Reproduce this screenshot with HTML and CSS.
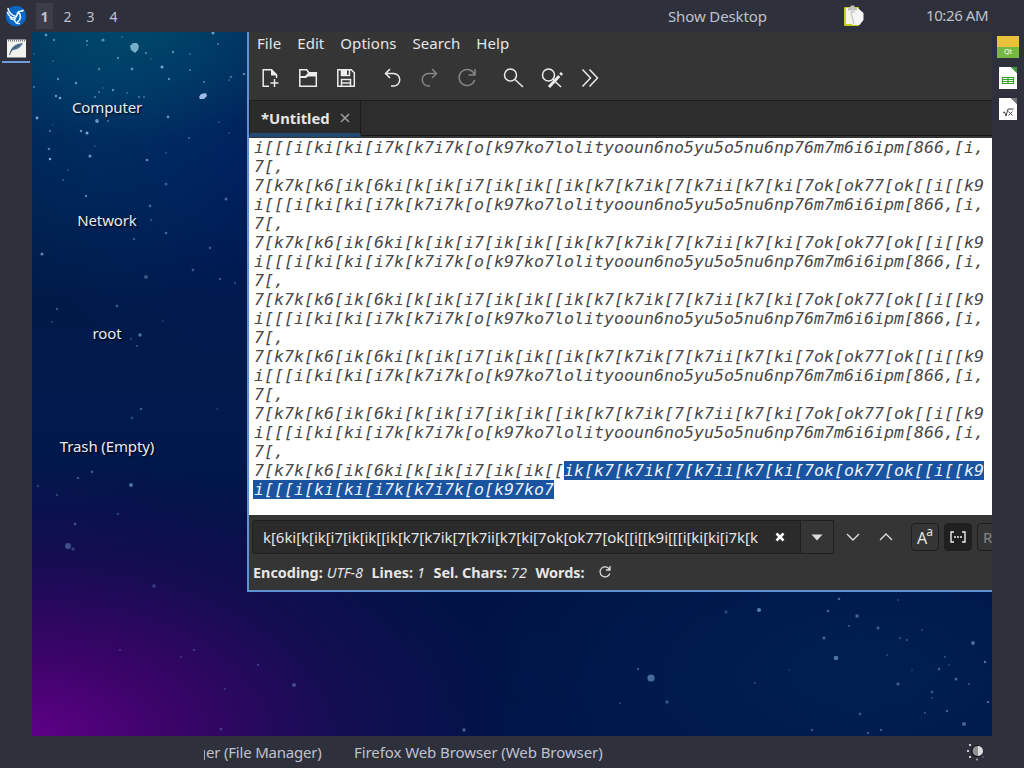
FILE: index.html
```html
<!DOCTYPE html>
<html lang="en">
<head>
  <meta charset="UTF-8" />
  <meta name="viewport" content="width=device-width, initial-scale=1.0"/>
  <title>Desktop</title>
  <link rel="stylesheet" href="styles.css">
</head>
<body>
  <div class="screen">
    <header class="panel top-panel">
      <svg class="start" width="22" height="22" viewBox="0 0 22 22">
        <circle cx="11" cy="11" r="10.3" fill="#0a68c4"/>
        <g fill="none" stroke="#e9f5ff" stroke-linecap="round">
          <path d="M3 3.500C4 8 7 10.500 11 11.500M2.500 7.500C3.500 11 7 13 10 13M5 12.500c1 2 3 2.500 5 2" stroke-width="1.500"/>
          <path d="M10 13c2.500-1 1.500-4.500 3.500-6 1.500-1 3-.5 4.500-1.500M13.500 7.500c3 2.500 2.500 7-1 9.500" stroke-width="1.700"/>
          <path d="M9.500 15c.5 2 2 4 5 3.500" stroke-width="1.300"/>
        </g>
      </svg>
      <nav class="pager">
        <span class="page current">1</span>
        <span class="page">2</span>
        <span class="page">3</span>
        <span class="page">4</span>
      </nav>
      <span class="show-desktop">Show Desktop</span>
      <svg class="clipboard" width="22" height="22" viewBox="0 0 22 22">
        <rect x="1" y="2" width="15" height="19" rx="1" fill="#c5cf18"/>
        <path d="M3 3h12v16H3z" fill="#f4f4e8"/>
        <path d="M8 7l8-3 4.500 4v7l-4 5H9z" fill="#f5f5f5"/>
        <path d="M8 7l3 12.500M8 7h4" stroke="#bbb" fill="none"/>
        <path d="M5 2.500h2.500V.5h4v2H14v3H5z" fill="#c2c2c2"/>
      </svg>
      <span class="clock">10:26 AM</span>
    </header>

    <aside class="panel left-panel">
      <div class="task">
        <svg width="20" height="20" viewBox="0 0 20 20">
          <rect x="0" y="1.500" width="19" height="18" fill="#f2f2ee"/>
          <path d="M1 2.500h17" stroke="#777" stroke-width="2" stroke-dasharray="1 1"/>
          <path d="M3 16c0-6 4-10 13-11-2 4-5 7-11 7z" fill="#56789a"/>
          <path d="M2.500 17C4 12 8 9 13 6.500" fill="none" stroke="#26425a" stroke-width=".8"/>
        </svg>
      </div>
    </aside>

    <main class="desktop">
      <svg class="stars" width="960" height="704" viewBox="32 32 960 704">
        <g fill="#9fd3e8">
          <path d="M130 46l3-3h4l2 3-1 4-3 3-4-3z" opacity=".75"/>
          <path d="M199 97l2-3 5-1 1 3-3 3h-4z" fill="#b9d4ff" opacity=".85"/>
        </g>
        <g id="stars" fill="#7fb2da"></g>
      </svg>

      <div class="icons">
        <span class="icon-label">Computer</span>
        <span class="icon-label">Network</span>
        <span class="icon-label">root</span>
        <span class="icon-label">Trash (Empty)</span>
      </div>

      <section class="window">
        <nav class="menubar">
          <span>File</span>
          <span>Edit</span>
          <span>Options</span>
          <span>Search</span>
          <span>Help</span>
        </nav>

        <div class="toolbar">
          <svg class="tool" viewBox="0 0 22 22"><path d="M10 19.300H4.200V2.700h8.300l5 5V11M15.500 12v8M11.500 16h8"/><path class="fill" d="M12 2l6.500 6.500H12z"/></svg>
          <svg class="tool" viewBox="0 0 22 22"><path d="M2.800 19.300V2.700h7l2 3h7.500v13.600z"/><path class="fill" d="M9 2.700L12 5h7.500v4.500H11L9 11H3V9h5l3-3z"/></svg>
          <svg class="tool" viewBox="0 0 22 22"><path d="M2.800 2.800h13.500l3 3v13.500H2.800zM6.500 19v-6.500h9V19M6.500 3v5.500h8V3M6.500 16h9"/><path class="fill" d="M7 3h5v5H7z"/></svg>
          <svg class="tool undo" viewBox="0 0 22 22"><path d="M9 2L4.500 6.500 9 11M5 6.500h7.500a6 6 0 0 1 0 12.500H10"/></svg>
          <svg class="tool off" viewBox="0 0 22 22"><path d="M13 2l4.500 4.500L13 11M17 6.500H9.500a6 6 0 0 0 0 12.500H11"/></svg>
          <svg class="tool off" viewBox="0 0 22 22"><path d="M17.500 7.500A8 8 0 1 0 17.700 13M18 2v6h-6.500"/></svg>
          <svg class="tool find" viewBox="0 0 22 22"><circle cx="7.500" cy="8" r="6"/><path d="M12 12.500l8 7.500"/></svg>
          <svg class="tool" viewBox="0 0 22 22"><circle cx="7.500" cy="8" r="6"/><path d="M11.500 12l8.500 8"/><path class="pen" d="M21 6L8 20"/></svg>
          <svg class="tool" viewBox="0 0 22 22"><path d="M3.500 2.500l8 8.500-8 8.500M10.500 2.500l8 8.500-8 8.500"/></svg>
        </div>

        <div class="tabs">
          <div class="tab">
            <span>*Untitled</span>
            <svg width="10" height="10" viewBox="0 0 10 10"><path d="M1 1l8 8M9 1L1 9"/></svg>
          </div>
        </div>

        <div class="editor">
          <div class="line">i[[[i[ki[ki[i7k[k7i7k[o[k97ko7lolityooun6no5yu5o5nu6np76m7m6i6ipm[866,[i,</div>
          <div class="line">7[,</div>
          <div class="line">7[k7k[k6[ik[6ki[k[ik[i7[ik[ik[[ik[k7[k7ik[7[k7ii[k7[ki[7ok[ok77[ok[[i[[k9</div>
          <div class="line">i[[[i[ki[ki[i7k[k7i7k[o[k97ko7lolityooun6no5yu5o5nu6np76m7m6i6ipm[866,[i,</div>
          <div class="line">7[,</div>
          <div class="line">7[k7k[k6[ik[6ki[k[ik[i7[ik[ik[[ik[k7[k7ik[7[k7ii[k7[ki[7ok[ok77[ok[[i[[k9</div>
          <div class="line">i[[[i[ki[ki[i7k[k7i7k[o[k97ko7lolityooun6no5yu5o5nu6np76m7m6i6ipm[866,[i,</div>
          <div class="line">7[,</div>
          <div class="line">7[k7k[k6[ik[6ki[k[ik[i7[ik[ik[[ik[k7[k7ik[7[k7ii[k7[ki[7ok[ok77[ok[[i[[k9</div>
          <div class="line">i[[[i[ki[ki[i7k[k7i7k[o[k97ko7lolityooun6no5yu5o5nu6np76m7m6i6ipm[866,[i,</div>
          <div class="line">7[,</div>
          <div class="line">7[k7k[k6[ik[6ki[k[ik[i7[ik[ik[[ik[k7[k7ik[7[k7ii[k7[ki[7ok[ok77[ok[[i[[k9</div>
          <div class="line">i[[[i[ki[ki[i7k[k7i7k[o[k97ko7lolityooun6no5yu5o5nu6np76m7m6i6ipm[866,[i,</div>
          <div class="line">7[,</div>
          <div class="line">7[k7k[k6[ik[6ki[k[ik[i7[ik[ik[[ik[k7[k7ik[7[k7ii[k7[ki[7ok[ok77[ok[[i[[k9</div>
          <div class="line">i[[[i[ki[ki[i7k[k7i7k[o[k97ko7lolityooun6no5yu5o5nu6np76m7m6i6ipm[866,[i,</div>
          <div class="line">7[,</div>
          <div class="line"><span>7[k7k[k6[ik[6ki[k[ik[i7[ik[ik[[</span><mark>ik[k7[k7ik[7[k7ii[k7[ki[7ok[ok77[ok[[i[[k9</mark></div>
          <div class="line"><mark class="from-start">i[[[i[ki[ki[i7k[k7i7k[o[k97ko7</mark></div>
        </div>

        <div class="findbar">
          <div class="field">
            <span class="query">k[6ki[k[ik[i7[ik[ik[[ik[k7[k7ik[7[k7ii[k7[ki[7ok[ok77[ok[[i[[k9i[[[i[ki[ki[i7k[k</span>
            <svg class="clear" width="12" height="12" viewBox="0 0 12 12"><path d="M2.500 2.500l7 7M9.500 2.500l-7 7"/></svg>
          </div>
          <div class="drop"><svg width="12" height="7" viewBox="0 0 12 7"><path d="M.5.5h11L6 6.500z"/></svg></div>
          <svg class="arrow" width="14" height="8" viewBox="0 0 14 8"><path d="M1 1l6 6 6-6"/></svg>
          <svg class="arrow" width="14" height="8" viewBox="0 0 14 8"><path d="M1 7l6-6 6 6"/></svg>
          <div class="toggle case">A<sup>a</sup></div>
          <div class="toggle active">
            <svg width="16" height="12" viewBox="0 0 16 12"><path d="M4 1H1v10h3M12 1h3v10h-3M4 6h2M7 6h2M10 6h2"/></svg>
          </div>
          <div class="toggle regex">R</div>
        </div>

        <div class="status">
          <b>Encoding:</b><i>UTF-8</i>
          <b>Lines:</b><i>1</i>
          <b>Sel. Chars:</b><i>72</i>
          <b>Words:</b>
          <svg width="14" height="14" viewBox="0 0 14 14"><path d="M11.500 4.500a5 5 0 1 0 .3 4M12 1v4H8"/></svg>
        </div>
      </section>
    </main>

    <aside class="panel right-panel">
      <div class="qt"><span>Qt</span></div>
      <svg class="doc" width="18" height="22" viewBox="0 0 18 22">
        <path d="M0 0h12l6 6v16H0z" fill="#fff"/><path d="M12 0h6v6z" fill="#3f9c35"/>
        <path d="M3.500 10.500h11v6h-11zM3.500 12.500h11M3.500 14.500h11M9 10.500v6" fill="none" stroke="#36a02c" stroke-width="1.200"/>
      </svg>
      <svg class="doc" width="18" height="22" viewBox="0 0 18 22">
        <path d="M0 0h12l6 6v16H0z" fill="#fff"/><path d="M12 0h6v6z" fill="#777"/>
        <path d="M4 14.500l1.500-.5 1.500 4 2-7h5.500M9.500 13.500l4 4M13.500 13.500l-4 4" fill="none" stroke="#444"/>
      </svg>
    </aside>

    <footer class="panel bottom-panel">
      <span class="cut"></span>
      <span class="launch files">er (File Manager)</span>
      <span class="launch browser">Firefox Web Browser (Web Browser)</span>
      <svg class="brightness" width="18" height="18" viewBox="0 0 18 18">
        <circle cx="10" cy="8" r="6" fill="#17181d"/>
        <circle cx="10.500" cy="8" r="5" fill="#8f9194"/>
        <path d="M11 3a5 5 0 0 1 0 10z" fill="#dcdcdc"/>
        <g fill="#fff"><circle cx="3" cy="2" r="1"/><circle cx="1" cy="8" r="1"/><circle cx="3" cy="14" r="1"/><circle cx="10" cy="16.500" r="1" opacity=".6"/><circle cx="16" cy="14" r="1" opacity=".2"/></g>
      </svg>
    </footer>
  </div>

  <script>
    // x, y, radius, opacity
    const stars = [
      [46,35,1.3,.8],[54,40,1.2,.6],[87,41,1.1,.7],[87,45,.9,.5],[103,40,1.6,.7],[122,37,.9,.4],[118,58,1.2,.6],
      [146,53,1.1,.7],[151,59,.8,.4],[173,52,1.2,.7],[190,54,1,.4],[213,33,1.5,.8],[218,44,1,.6],[162,67,1.5,.9],
      [190,70,1.1,.6],[169,79,1.2,.7],[132,69,1.4,.7],[99,69,1.2,.6],[58,79,1.2,.7],[76,83,1.2,.8],[53,61,.9,.3],
      [34,54,.8,.5],[34,87,1,.6],[56,96,1.2,.8],[60,98,1.3,.9],[113,90,1.2,.7],[103,88,.8,.4],[99,92,1,.6],
      [95,97,1.1,.6],[127,93,.9,.5],[139,97,1,.6],[144,97,1,.5],[37,118,1.4,.9],[97,121,1.9,.8],[108,121,1.1,.5],
      [81,131,1.2,.8],[87,133,1.5,.9],[50,131,1.1,.6],[53,125,.8,.3],[90,156,1.6,.8],[49,149,1.3,.6],[50,159,1.3,.9],
      [147,160,1.3,.7],[166,153,1.1,.3],[168,117,1.4,.7],[204,82,1.1,.6],[231,77,1.3,.5],[229,80,1,.4],[244,74,1.3,.6],
      [189,138,1.1,.5],[219,122,1,.3],[229,133,.9,.3],[95,146,.8,.4],[68,170,.9,.3],[63,180,1,.4],[86,196,1.3,.6],
      [166,184,1.5,.4],[150,206,1.4,.5],[151,220,1.2,.3],[226,199,1.5,.5],[166,233,1.3,.5],[134,239,1.2,.4],
      [42,254,1.5,.7],[210,248,1.4,.4],[193,270,1.4,.4],[146,277,2,.4],[220,279,1.2,.4],[235,283,1.2,.3],[57,309,1.2,.4],
      [117,306,1.4,.4],[52,322,1.1,.3],[140,335,1.7,.6],[137,346,1.1,.4],[163,321,1,.2],[131,339,1.5,.2],[141,409,1.3,.4],
      [132,418,1.4,.3],[217,409,1,.2],[92,472,1.4,.4],[78,478,1.3,.4],[131,485,2,.6],[38,486,1.2,.3],[57,495,1.3,.3],
      [118,514,1.2,.3],[75,524,1.4,.4],[68,546,3,.4],[73,549,1.7,.3],[154,586,1.8,.3],[194,650,1,.4],[181,657,1,.3],
      [258,665,1.3,.3],[294,685,2,.4],[225,689,1,.3],[221,729,1.6,.3],[120,650,1.3,.2],[464,730,1.8,.5],
      [651,678,3.6,.55],[638,669,1.2,.4],[667,702,1.7,.4],[620,703,1.1,.3],[759,610,2.1,.65],[726,612,1.7,.3],
      [839,599,1.3,.5],[828,611,1.3,.5],[857,616,1.7,.5],[849,626,1.3,.3],[878,628,1.4,.5],[824,638,1.6,.5],
      [836,658,2.3,.6],[900,638,1.2,.3],[907,640,1.2,.3],[922,630,1.1,.3],[973,643,1.9,.55],[985,662,1.2,.6],
      [945,657,1,.4],[939,669,1.2,.5],[949,665,.9,.3],[956,679,1.5,.5],[969,684,1.1,.4],[898,684,1.5,.5],[932,692,1.4,.4],
      [932,698,1.1,.3],[988,702,1.3,.5],[947,711,1.2,.5],[925,713,1.1,.4],[964,724,2,.5],[860,714,1.4,.4],[881,730,1.3,.4],
      [868,733,1.3,.4],[812,730,1.2,.4],[755,683,1.1,.3],[789,670,1,.2],[887,655,1,.3],[912,670,1,.2],[898,600,1.2,.2]
    ];
    const group = document.getElementById("stars");
    stars.forEach(([x, y, r, o]) => {
      const c = document.createElementNS("http://www.w3.org/2000/svg", "circle");
      c.setAttribute("cx", x);
      c.setAttribute("cy", y);
      c.setAttribute("r", r);
      c.setAttribute("opacity", o);
      group.appendChild(c);
    });
  </script>
</body>
</html>
```

FILE: styles.css
```css
body {
  margin: 0;
  font-family: "Noto Sans", sans-serif;
  font-size: 15px;
  color: #e6e6e6;
  overflow: hidden;
}
.screen {
  width: 1024px;
  height: 768px;
  display: grid;
  grid-template-columns: 32px 960px 32px;
  grid-template-rows: 32px 704px 32px;
}
.panel {
  background-color: #2e303c;
  color: #bfc2ce;
  box-sizing: border-box;
}
.panel, .menubar, .status, .query, .icon-label {
  white-space: nowrap;
}
svg {
  flex: none;
  display: block;
}

/* panels */
.top-panel {
  grid-column: 1 / 4;
  display: flex;
  align-items: center;
}
.start {
  margin-left: 5px;
}
.pager {
  display: flex;
  margin-left: 6px;
  width: 635px;
}
.page {
  width: 23px;
  height: 26px;
  line-height: 27px;
  text-align: center;
  font-size: 14px;
}
.current {
  width: 17px;
  margin: 0 3px;
  background-color: #3c3d47;
  font-weight: bold;
}
.show-desktop {
  width: 175px;
  letter-spacing: -0.13px;
}
.clipboard {
  margin-right: 61px;
}
.clock {
  line-height: 20px;
  margin-bottom: 2px;
  letter-spacing: -0.4px;
}
.task {
  height: 29px;
  margin: 0 2px;
  border-bottom: 2px solid #6f9bd8;
}
.task svg {
  padding: 6px 0 0 5px;
}
.right-panel {
  display: flex;
  flex-direction: column;
  align-items: center;
  padding-top: 4px;
  gap: 9px;
}
.qt {
  width: 22px;
  height: 22px;
  background: linear-gradient(#e9c13b 50%, #76b843 50%);
  font-size: 7px;
  line-height: 32px;
  text-align: center;
  color: #fff;
}
.bottom-panel {
  grid-column: 1 / 4;
  display: flex;
  align-items: center;
}
.cut {
  width: 1px;
  height: 10px;
  margin: 5px 1px 0 204px;
  background-color: #a9acb8;
}
.files {
  width: 148px;
  letter-spacing: -0.2px;
}
.browser {
  width: 613px;
  letter-spacing: -0.08px;
}

/* desktop */
.desktop {
  position: relative;
  overflow: hidden;
  background:
    radial-gradient(ellipse 480px 280px at 0 100%, #5e0086 0, rgba(72,0,112,.8) 30%, rgba(38,8,92,.5) 65%, rgba(10,12,75,0) 100%),
    radial-gradient(ellipse 230px 120px at 95px -10px, rgba(0,76,108,.9), rgba(0,70,110,0)),
    radial-gradient(ellipse 240px 230px at 70px 40px, rgba(0,66,112,.6), rgba(0,40,100,0)),
    radial-gradient(ellipse 220px 220px at 200px 130px, rgba(0,26,96,.7), rgba(0,26,96,0)),
    radial-gradient(ellipse 400px 200px at 830px 640px, #002052, rgba(0,32,84,0)),
    linear-gradient(#001d50 0, #001a48 40%, #001a4e 56%, #001244 75%, #001448 100%);
}
.stars {
  position: absolute;
  left: 0;
  top: 0;
}
.icons {
  position: relative;
  display: flex;
  flex-direction: column;
  align-items: center;
  width: 150px;
  padding-top: 62px;
}
.icon-label {
  height: 113px;
  line-height: 26px;
  letter-spacing: -0.12px;
  color: #e8ecf4;
  text-shadow: 1px 1px 2px #000;
}

/* editor window */
.window {
  position: absolute;
  left: 215px;
  top: 0;
  width: 745px;
  height: 560px;
  box-sizing: border-box;
  border-left: 2px solid #5c93d0;
  border-bottom: 2px solid #5c93d0;
  background-color: #353535;
  overflow: hidden;
}
.menubar {
  display: flex;
  gap: 16px;
  height: 24px;
  line-height: 23px;
  padding-left: 8px;
  letter-spacing: 0.06px;
}
.toolbar {
  display: flex;
  align-items: center;
  gap: 16px;
  height: 44px;
  padding-left: 10px;
  border-bottom: 1px solid #1c1c1c;
}
.tool {
  width: 22px;
  height: 22px;
  fill: none;
  stroke: #ececec;
  stroke-width: 1.5;
}
.tool .fill {
  fill: #ececec;
  stroke: none;
}
.tool .pen {
  stroke-width: 3;
  stroke-dasharray: 2.5 1.5 20;
}
.undo {
  margin-left: 8px;
}
.find {
  margin-left: 8px;
}
.off {
  stroke: #858585;
}
.tabs {
  display: flex;
  height: 34px;
  background-color: #2d2d2d;
  border-bottom: 1px solid #161616;
  margin-bottom: 2px;
}
.tab {
  display: flex;
  align-items: center;
  gap: 10px;
  width: 112px;
  height: 36px;
  padding: 1px 0 0 11px;
  box-sizing: border-box;
  border-right: 1px solid #1c1c1c;
  border-left: 1px solid #1c1c1c;
  border-bottom: 4px solid #234875;
  font-weight: bold;
  font-size: 14.8px;
  background-color: #2b2b2b;
}
.tab path {
  stroke: #999;
  stroke-width: 1.7;
}
.editor {
  height: 377px;
  padding-left: 4px;
  background-color: #fff;
  color: #484848;
  font: italic 16.61px/19px "DejaVu Sans Mono", monospace;
}
.line {
  display: flex;
  height: 19px;
  padding-left: 1px;
  white-space: pre;
}
mark {
  background-color: #1a53a0;
  color: #e8f0fb;
}
.from-start {
  margin-left: -1px;
  padding-left: 1px;
}
.findbar {
  display: flex;
  align-items: center;
  height: 34px;
  padding: 5px 0 0 3px;
}
.field, .drop {
  display: flex;
  align-items: center;
  height: 34px;
  box-sizing: border-box;
  border: 1px solid #1f1f1f;
}
.field {
  width: 549px;
  flex: none;
  padding-left: 10px;
  border-radius: 3px 0 0 3px;
  background-color: #2b2b2b;
}
.query {
  width: 511px;
  overflow: hidden;
  line-height: 26px;
  letter-spacing: -0.045px;
}
.clear {
  stroke: #fff;
  stroke-width: 2.6;
}
.drop {
  width: 33px;
  flex: none;
  justify-content: center;
  border-left: none;
  margin-right: 12px;
}
.drop path {
  fill: #ddd;
}
.arrow {
  margin-right: 19px;
  fill: none;
  stroke: #ddd;
  stroke-width: 1.4;
}
.arrow + .toggle {
  margin-left: -1px;
}
.toggle {
  display: flex;
  flex: none;
  align-items: center;
  justify-content: center;
  width: 28px;
  height: 28px;
  box-sizing: border-box;
  margin-right: 5px;
  border: 1px solid #1f1f1f;
  border-radius: 4px;
}
.case {
  font-size: 16px;
  line-height: 18px;
  padding-top: 1px;
}
.case sup {
  font-size: 12px;
  line-height: 8px;
  margin: 0 0 12px -1px;
}
.active {
  background-color: #202020;
}
.active path {
  fill: none;
  stroke: #eee;
  stroke-width: 1.4;
}
.regex {
  justify-content: flex-start;
  padding-left: 5px;
  color: #858585;
}
.status {
  display: flex;
  align-items: center;
  height: 36px;
  padding-left: 4px;
  font-size: 14.4px;
}
.status b {
  margin-right: 4px;
}
.status i {
  margin-right: 8.5px;
}
.status svg {
  margin-left: 9px;
  fill: none;
  stroke: #ddd;
  stroke-width: 1.3;
}
```
